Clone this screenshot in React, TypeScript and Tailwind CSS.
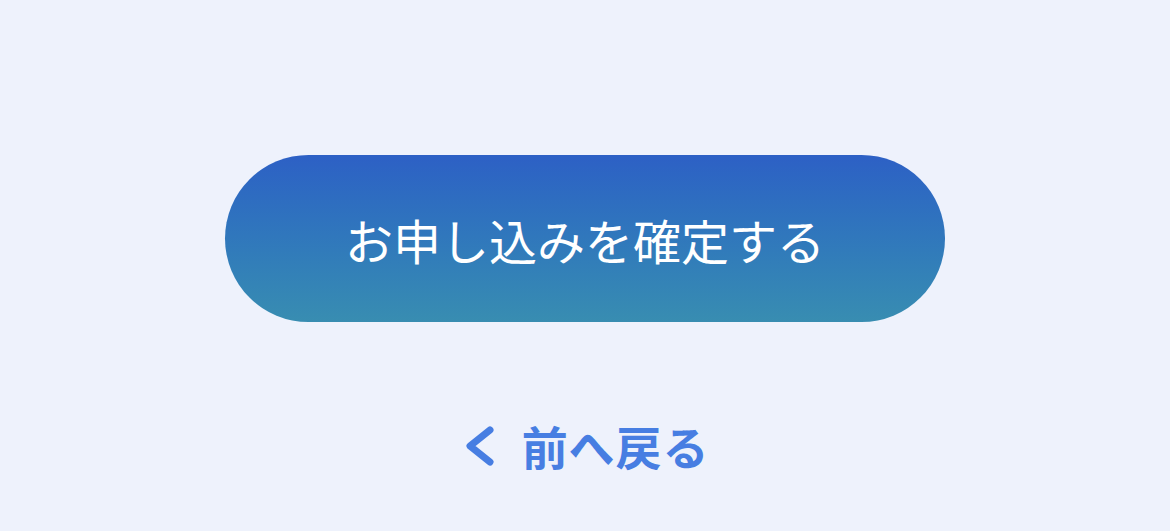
import React from "react";

export default function App() {
  return (
    <div
      className="flex h-[531px] w-full flex-col items-center bg-[#eef2fc] pt-[155px]"
      style={{ fontFamily: '"Noto Sans CJK JP", "Noto Sans", sans-serif' }}
    >
      <button className="flex h-[167px] w-[720px] items-center justify-center rounded-full bg-gradient-to-b from-[#2d60c5] to-[#388db1] text-[48px] font-normal text-white">
        お申し込みを確定する
      </button>
      <a href="#" className="mt-[89px] flex items-center gap-[27px] text-[#477ee2]">
        <svg width="34" height="42" viewBox="0 0 34 42" fill="none">
          <path d="M29 5 L9 21 L29 37" stroke="currentColor" strokeWidth="7" strokeLinecap="round" strokeLinejoin="round" />
        </svg>
        <span className="text-[46px] font-bold tracking-[0.02em]">前へ戻る</span>
      </a>
    </div>
  );
}
